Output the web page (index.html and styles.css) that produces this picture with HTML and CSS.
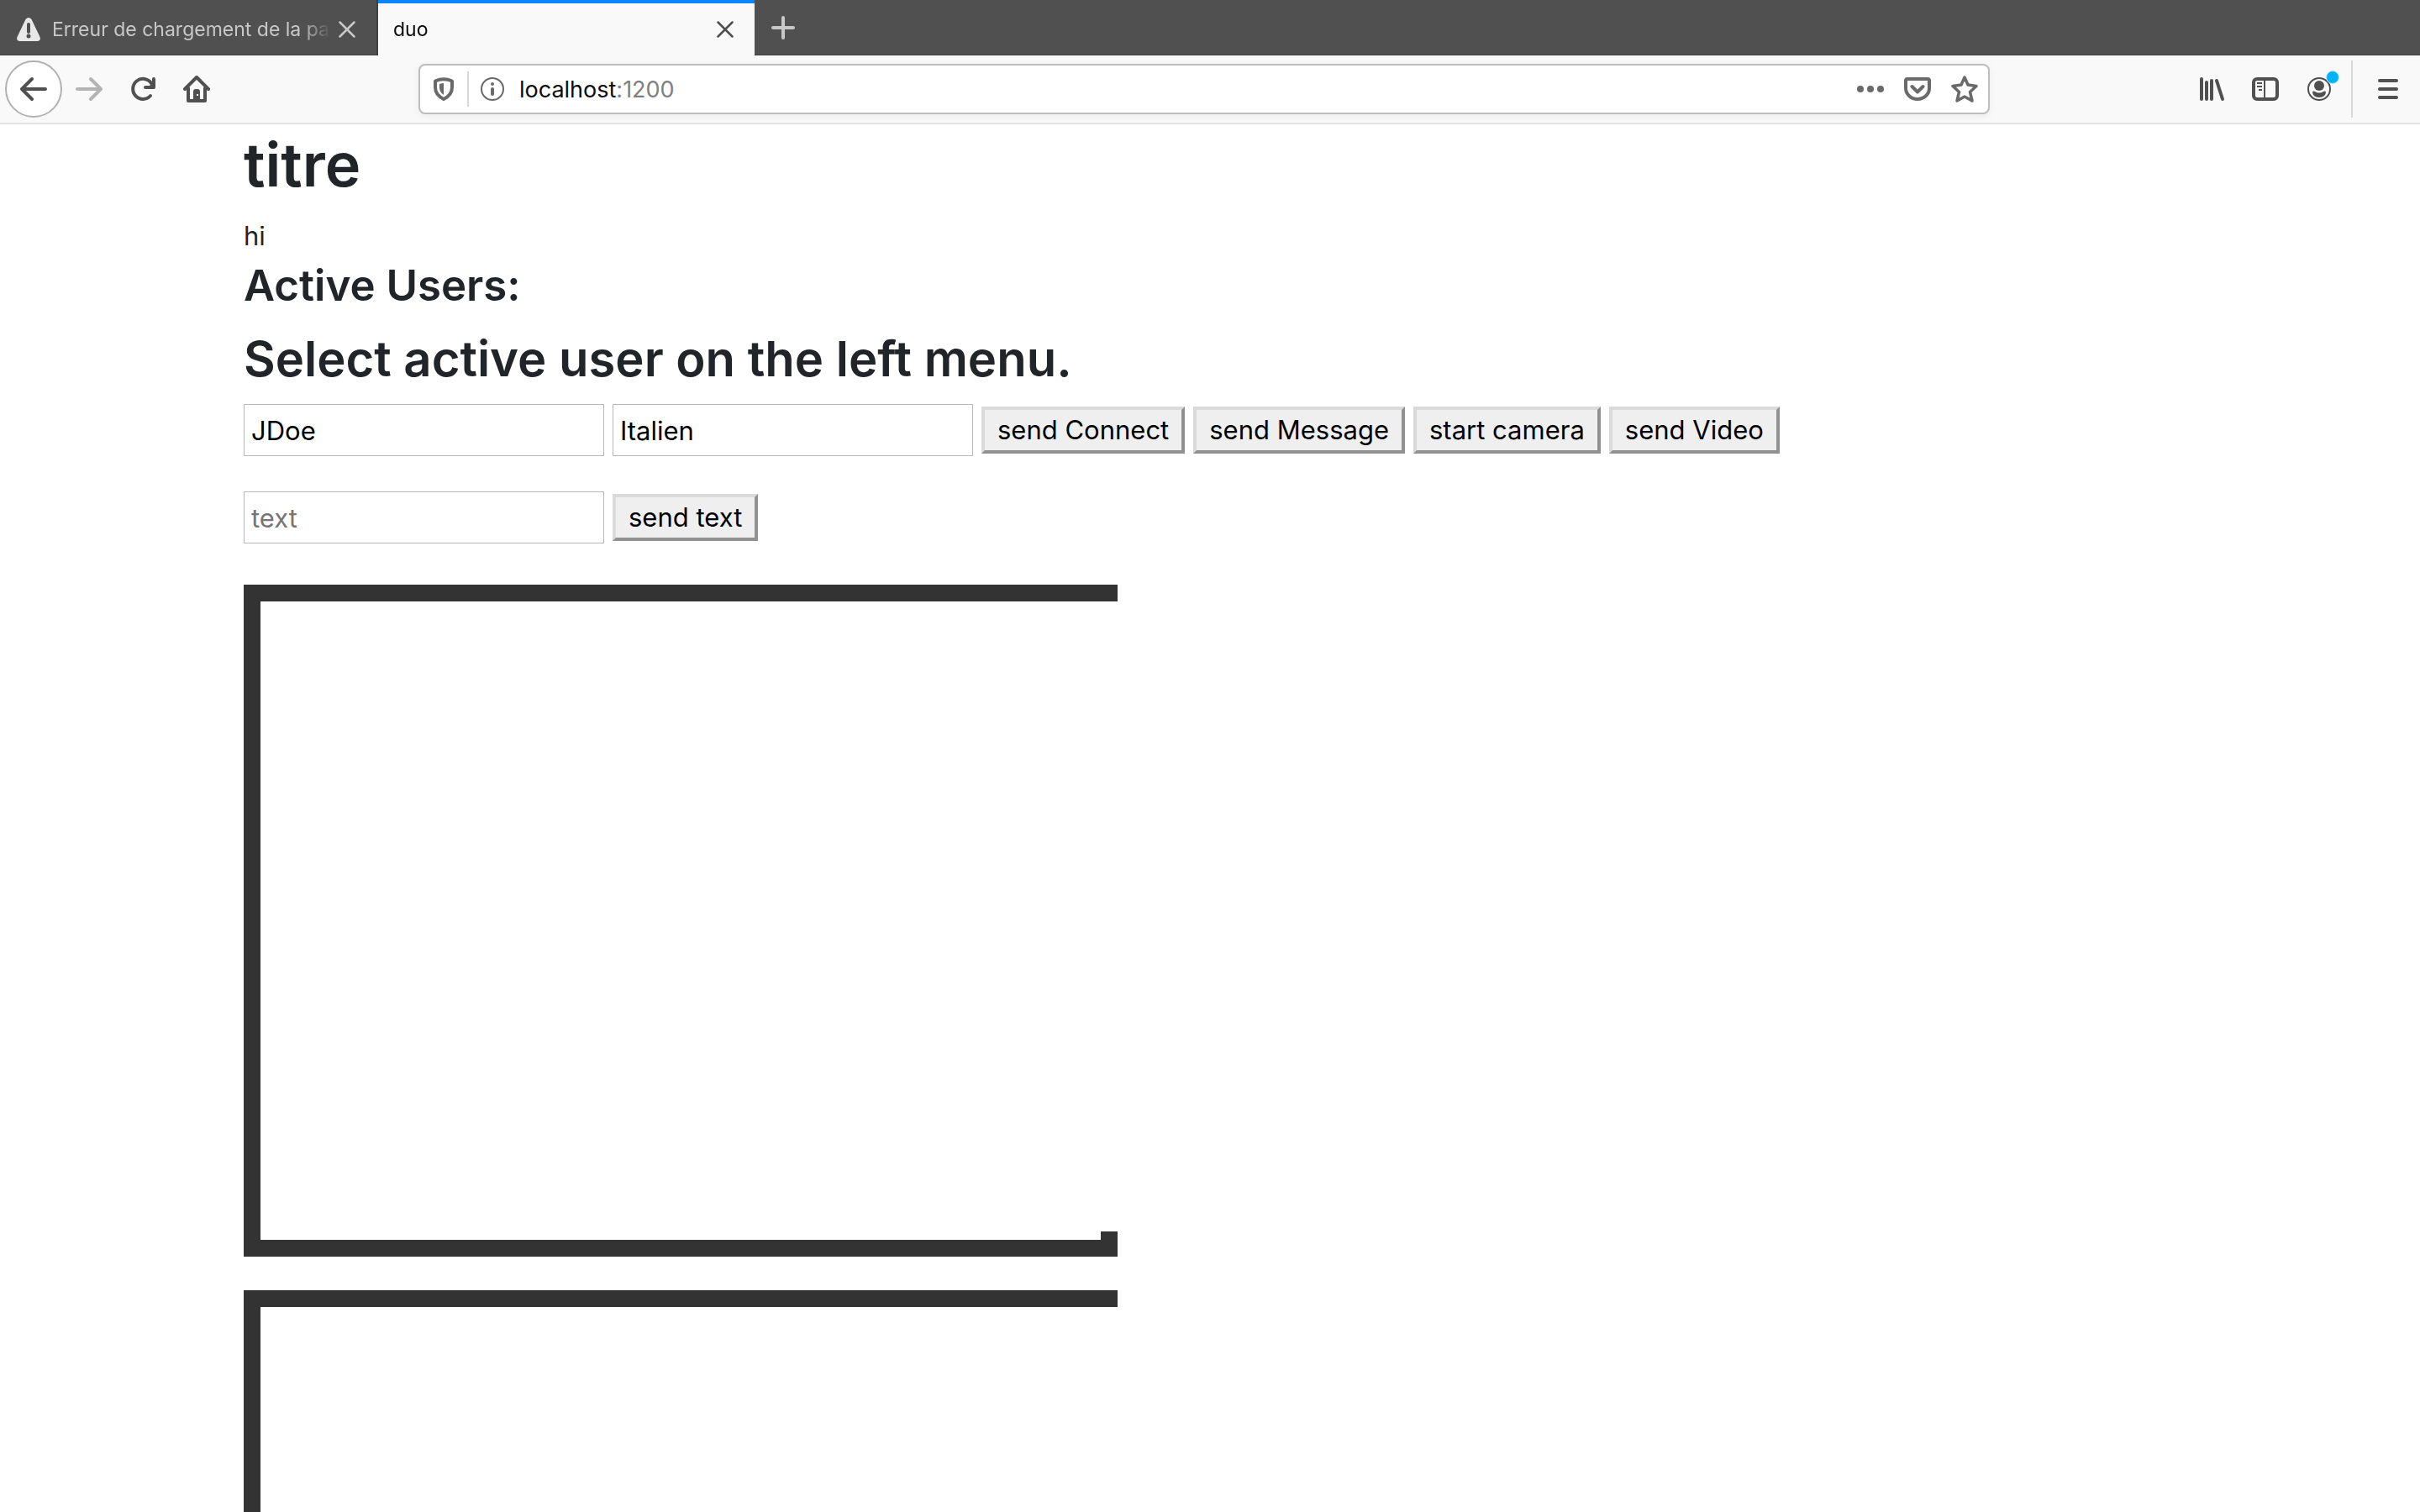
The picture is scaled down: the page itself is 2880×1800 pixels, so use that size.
FILE: index.html
```html
<!DOCTYPE html>
<html lang="fr">
<head>
<meta charset="utf-8">
<title>duo</title>
<link rel="stylesheet" href="styles.css">
</head>
<body>
<header class="browser">
  <div class="tabs">
    <div class="tab">
      <svg class="tab-warning" width="28" height="28" viewBox="0 0 28 28" aria-hidden="true"><path fill="#e8e8e9" d="M10.500 2Q14-2 17.500 2L27.500 23Q29 27.500 24.500 28H3.500Q-1 27.500.5 23Z"/><path d="M14 8v9" stroke="#505050" stroke-width="4" stroke-linecap="round"/><circle cx="14" cy="22" r="2.500" fill="#505050"/></svg>
      <span class="tab-title">Erreur de chargement de la page</span>
      <button class="tab-close" aria-label="Fermer l'onglet"><svg width="20" height="20" viewBox="0 0 20 20" fill="none" stroke="currentColor" stroke-width="2.500" stroke-linecap="round"><path d="M1.500 1.500l17 17M18.500 1.500l-17 17"/></svg></button>
    </div>
    <div class="tab tab-active">
      <span class="tab-title">duo</span>
      <button class="tab-close" aria-label="Fermer l'onglet"><svg width="20" height="20" viewBox="0 0 20 20" fill="none" stroke="currentColor" stroke-width="2.500" stroke-linecap="round"><path d="M1.500 1.500l17 17M18.500 1.500l-17 17"/></svg></button>
    </div>
    <button class="new-tab" aria-label="Nouvel onglet"><svg width="28" height="28" viewBox="0 0 28 28" fill="none" stroke="currentColor" stroke-width="4" stroke-linecap="round"><path d="M14 2v24M2 14h24"/></svg></button>
  </div>
  <div class="toolbar">
    <nav class="nav-buttons" aria-label="Navigation">
      <button class="icon-button back" aria-label="Page précédente"><svg width="32" height="32" viewBox="0 0 32 32" fill="none" stroke="currentColor" stroke-width="4" stroke-linecap="round" stroke-linejoin="round"><path d="M14 4L2 16l12 12M3 16h27"/></svg></button>
      <button class="icon-button" aria-label="Page suivante" disabled><svg width="32" height="32" viewBox="0 0 32 32" fill="none" stroke="currentColor" stroke-width="4" stroke-linecap="round" stroke-linejoin="round"><path d="M18 4l12 12-12 12M29 16H2"/></svg></button>
      <button class="icon-button" aria-label="Actualiser"><svg width="32" height="32" viewBox="0 0 32 32" fill="none" stroke="currentColor" stroke-width="4" stroke-linecap="round" stroke-linejoin="round"><path d="M25 24A12 12 0 1 1 26 9"/><path d="M29 4v10H19"/><path d="M22 14l7-7v7z" fill="currentColor" stroke="none"/></svg></button>
      <button class="icon-button" aria-label="Accueil"><svg width="32" height="32" viewBox="0 0 32 32" fill="none" stroke="currentColor" stroke-width="4" stroke-linecap="round" stroke-linejoin="round"><path d="M2 16L16 2l14 14M6 15v15h20V15"/><path d="M12 30V19q0-3 3-3h2q3 0 3 3v11z" fill="currentColor" stroke="none"/><path fill="#f9f9fa" stroke="none" d="M16 22h2v2h-2z"/></svg></button>
    </nav>
    <div class="url-bar">
      <svg class="shield" width="24" height="28" viewBox="0 0 24 28" fill="none" stroke="#6a6a6b" stroke-width="4" aria-hidden="true"><path d="M2 4.500Q12 0 22 4.500V12q0 9-10 14Q2 21 2 12Z" stroke-linejoin="round"/><path fill="#6a6a6b" stroke="none" d="M12 7v14q-5-3-5-9V8q3-1 5-1z"/></svg>
      <svg class="info" width="28" height="28" viewBox="0 0 28 28" aria-hidden="true"><circle cx="14" cy="14" r="13" fill="none" stroke="#6a6a6b" stroke-width="2"/><circle cx="14" cy="8" r="2" fill="#6a6a6b"/><path d="M14 14v6" stroke="#6a6a6b" stroke-width="4" stroke-linecap="round"/></svg>
      <a class="url" href="http://localhost:1200">localhost<span class="port">:1200</span></a>
      <button class="icon-button" aria-label="Actions"><svg width="32" height="32" viewBox="0 0 32 32" fill="currentColor"><circle cx="4" cy="16" r="4"/><circle cx="16" cy="16" r="4"/><circle cx="28" cy="16" r="4"/></svg></button>
      <button class="icon-button" aria-label="Pocket"><svg width="32" height="32" viewBox="0 0 32 32" fill="none" stroke="currentColor" stroke-width="4" stroke-linecap="round" stroke-linejoin="round"><path d="M4 4h24q2 0 2 2v9a14 13 0 0 1-28 0V6q0-2 2-2z"/><path d="M9.500 13l6.500 6.500 6.500-6.500"/></svg></button>
      <button class="icon-button" aria-label="Marquer cette page"><svg width="32" height="32" viewBox="0 0 32 32" fill="none" stroke="currentColor" stroke-width="3.500" stroke-linejoin="round"><path d="M16 2l4 9 10 1.500-7.500 7L25 30l-9-5-9 5 2.500-10.500L2 12.500 12 11z"/></svg></button>
    </div>
    <div class="tools">
      <button class="icon-button" aria-label="Bibliothèque"><svg width="32" height="32" viewBox="0 0 32 32" fill="none" stroke="currentColor" stroke-width="4" stroke-linecap="round"><path d="M4 4v24M10 8v20M16 6v22M22 6l7 22"/></svg></button>
      <button class="icon-button" aria-label="Panneaux latéraux"><svg width="32" height="32" viewBox="0 0 32 32" fill="none" stroke="currentColor" stroke-width="4"><rect x="2" y="4" width="28" height="24" rx="4"/><path stroke-width="2" d="M15 4v24M6 9h6M6 13h6M8 17h4"/></svg></button>
      <button class="icon-button account" aria-label="Compte"><svg width="32" height="32" viewBox="0 0 32 32"><circle cx="16" cy="16" r="13" fill="none" stroke="currentColor" stroke-width="2"/><circle cx="16" cy="12" r="6" fill="currentColor"/><path fill="currentColor" d="M8 19q2-1 3 0 5 3 10 0 1-1 3 0 0 7-8 7t-8-7z"/></svg></button>
      <button class="icon-button menu" aria-label="Menu"><svg width="32" height="32" viewBox="0 0 32 32" stroke="currentColor" stroke-width="4" stroke-linecap="round"><path d="M6 6h20M6 16h20M6 26h20"/></svg></button>
    </div>
  </div>
</header>
<main class="page">
  <div class="container">
    <h1>titre</h1>
    <p>hi</p>
    <h3>Active Users:</h3>
    <h2>Select active user on the left menu.</h2>
    <form class="controls">
      <input type="text" value="JDoe" aria-label="Nom">
      <input type="text" value="Italien" aria-label="Langue">
      <button type="button">send Connect</button>
      <button type="button">send Message</button>
      <button type="button">start camera</button>
      <button type="button">send Video</button>
    </form>
    <form class="controls">
      <input type="text" placeholder="text" aria-label="Message">
      <button type="button">send text</button>
    </form>
    <div class="videos">
      <div class="frame"><div class="video"></div></div>
      <div class="frame"><div class="video"></div></div>
    </div>
  </div>
</main>
</body>
</html>
```
FILE: styles.css
```css
* {
  box-sizing: border-box;
}

body {
  margin: 0;
  height: 100vh;
  display: flex;
  flex-direction: column;
  overflow: hidden;
  background: #fff;
  color: #212529;
  font-family: Inter, "Liberation Sans", sans-serif;
  font-size: 31px;
  line-height: 46px;
}

svg {
  display: block;
  flex: none;
}

.browser {
  flex: none;
}

.browser button {
  display: grid;
  place-items: center;
  padding: 0;
  border: 0;
  background: none;
  color: inherit;
}

/* Tab strip */
.tabs {
  display: flex;
  height: 66px;
  background: #505050;
  border-bottom: 1px solid #3f3f40;
  color: #c8c8c8;
}

.tab {
  display: flex;
  align-items: center;
  width: 450px;
  height: 66px;
  padding: 4px 24px 0 20px;
  border-right: 2px solid #404040;
  font-size: 23px;
}

.tab-warning {
  margin-right: 14px;
}

.tab-title {
  flex: 1;
  overflow: hidden;
  white-space: nowrap;
  -webkit-mask-image: linear-gradient(to left, transparent, #000 36px);
  mask-image: linear-gradient(to left, transparent, #000 36px);
}

.tab-close {
  width: 22px;
  height: 28px;
  margin-left: 8px;
}

.tab-active {
  width: 448px;
  padding: 0 24px 0 18px;
  border-top: 4px solid #0a84ff;
  border-right: 0;
  background: #f9f9fa;
  color: #0c0c0d;
}

.tab-active .tab-close {
  color: #4f4f50;
}

.new-tab {
  width: 68px;
}

/* Toolbar */
.toolbar {
  display: flex;
  align-items: center;
  height: 82px;
  border-bottom: 2px solid #e1e1e2;
  background: #f9f9fa;
  color: #505051;
}

.nav-buttons,
.tools {
  display: flex;
  align-items: center;
}

.browser .icon-button {
  width: 64px;
  height: 68px;
}

.browser .icon-button:disabled {
  color: #b4b4b5;
}

.browser .back {
  width: 68px;
  margin-left: 6px;
  border: 2px solid #b1b1b1;
  border-radius: 50%;
  background: #fff;
}

.url-bar {
  flex: 1;
  display: flex;
  align-items: center;
  height: 60px;
  margin: 0 232px;
  padding: 0 0 0 16px;
  border: 2px solid #bdbdbe;
  border-radius: 8px;
  background: #fff;
  box-shadow: 0 2px 8px rgba(0, 0, 0, 0.06);
  color: #6a6a6b;
}

.shield {
  margin-right: 16px;
}

.info {
  box-sizing: content-box;
  padding: 7px 0 7px 14px;
  border-left: 2px solid #d7d7db;
}

.url {
  flex: 1;
  margin-left: 18px;
  padding-top: 2px;
  color: #0c0c0d;
  font-size: 27px;
  text-decoration: none;
}

.port {
  color: #808080;
}

.browser .url-bar .icon-button {
  width: 56px;
}

.account {
  position: relative;
}

.account::after {
  content: "";
  position: absolute;
  top: 12px;
  right: 8px;
  width: 14px;
  height: 14px;
  border: 1px solid #b5ebff;
  border-radius: 50%;
  background: #00b3f4;
}

.browser .menu {
  width: 82px;
  margin-left: 6px;
  padding-left: 4px;
  border-left: 2px solid #d9d9da;
}

/* Page */
.page {
  flex: 1;
  min-height: 0;
  overflow: hidden;
}

.container {
  max-width: 2300px;
  margin: 0 auto;
}

h1,
h2,
h3 {
  margin: 0 0 14px;
  font-weight: 600;
}

h1 {
  font-size: 72px;
  line-height: 96px;
}

h2 {
  font-size: 58px;
  line-height: 79px;
}

h3 {
  font-size: 51px;
  line-height: 68px;
}

p {
  margin: 0 0 2px;
}

.controls {
  display: flex;
  align-items: center;
  gap: 10px;
  margin: 0 0 42px;
}

.controls input {
  width: 429px;
  height: 62px;
  padding: 2px 8px;
  border: 1px solid #b8b8b8;
  background: #fff;
  color: #000;
  font: inherit;
}

.controls input::placeholder {
  color: #757575;
  opacity: 1;
}

.controls button {
  height: 56px;
  padding: 0 15px;
  border: 4px solid;
  border-color: #dadada #919191 #919191 #dadada;
  background: #efefef;
  color: #000;
  font: inherit;
  line-height: 48px;
}

/* The video area covers the frame's right border */
.videos {
  display: grid;
  gap: 40px;
  padding-top: 7px;
}

.frame {
  width: 1040px;
  height: 800px;
  border: 20px solid #333;
}

.video {
  width: 1020px;
  height: 750px;
  background: #fff;
}
```
